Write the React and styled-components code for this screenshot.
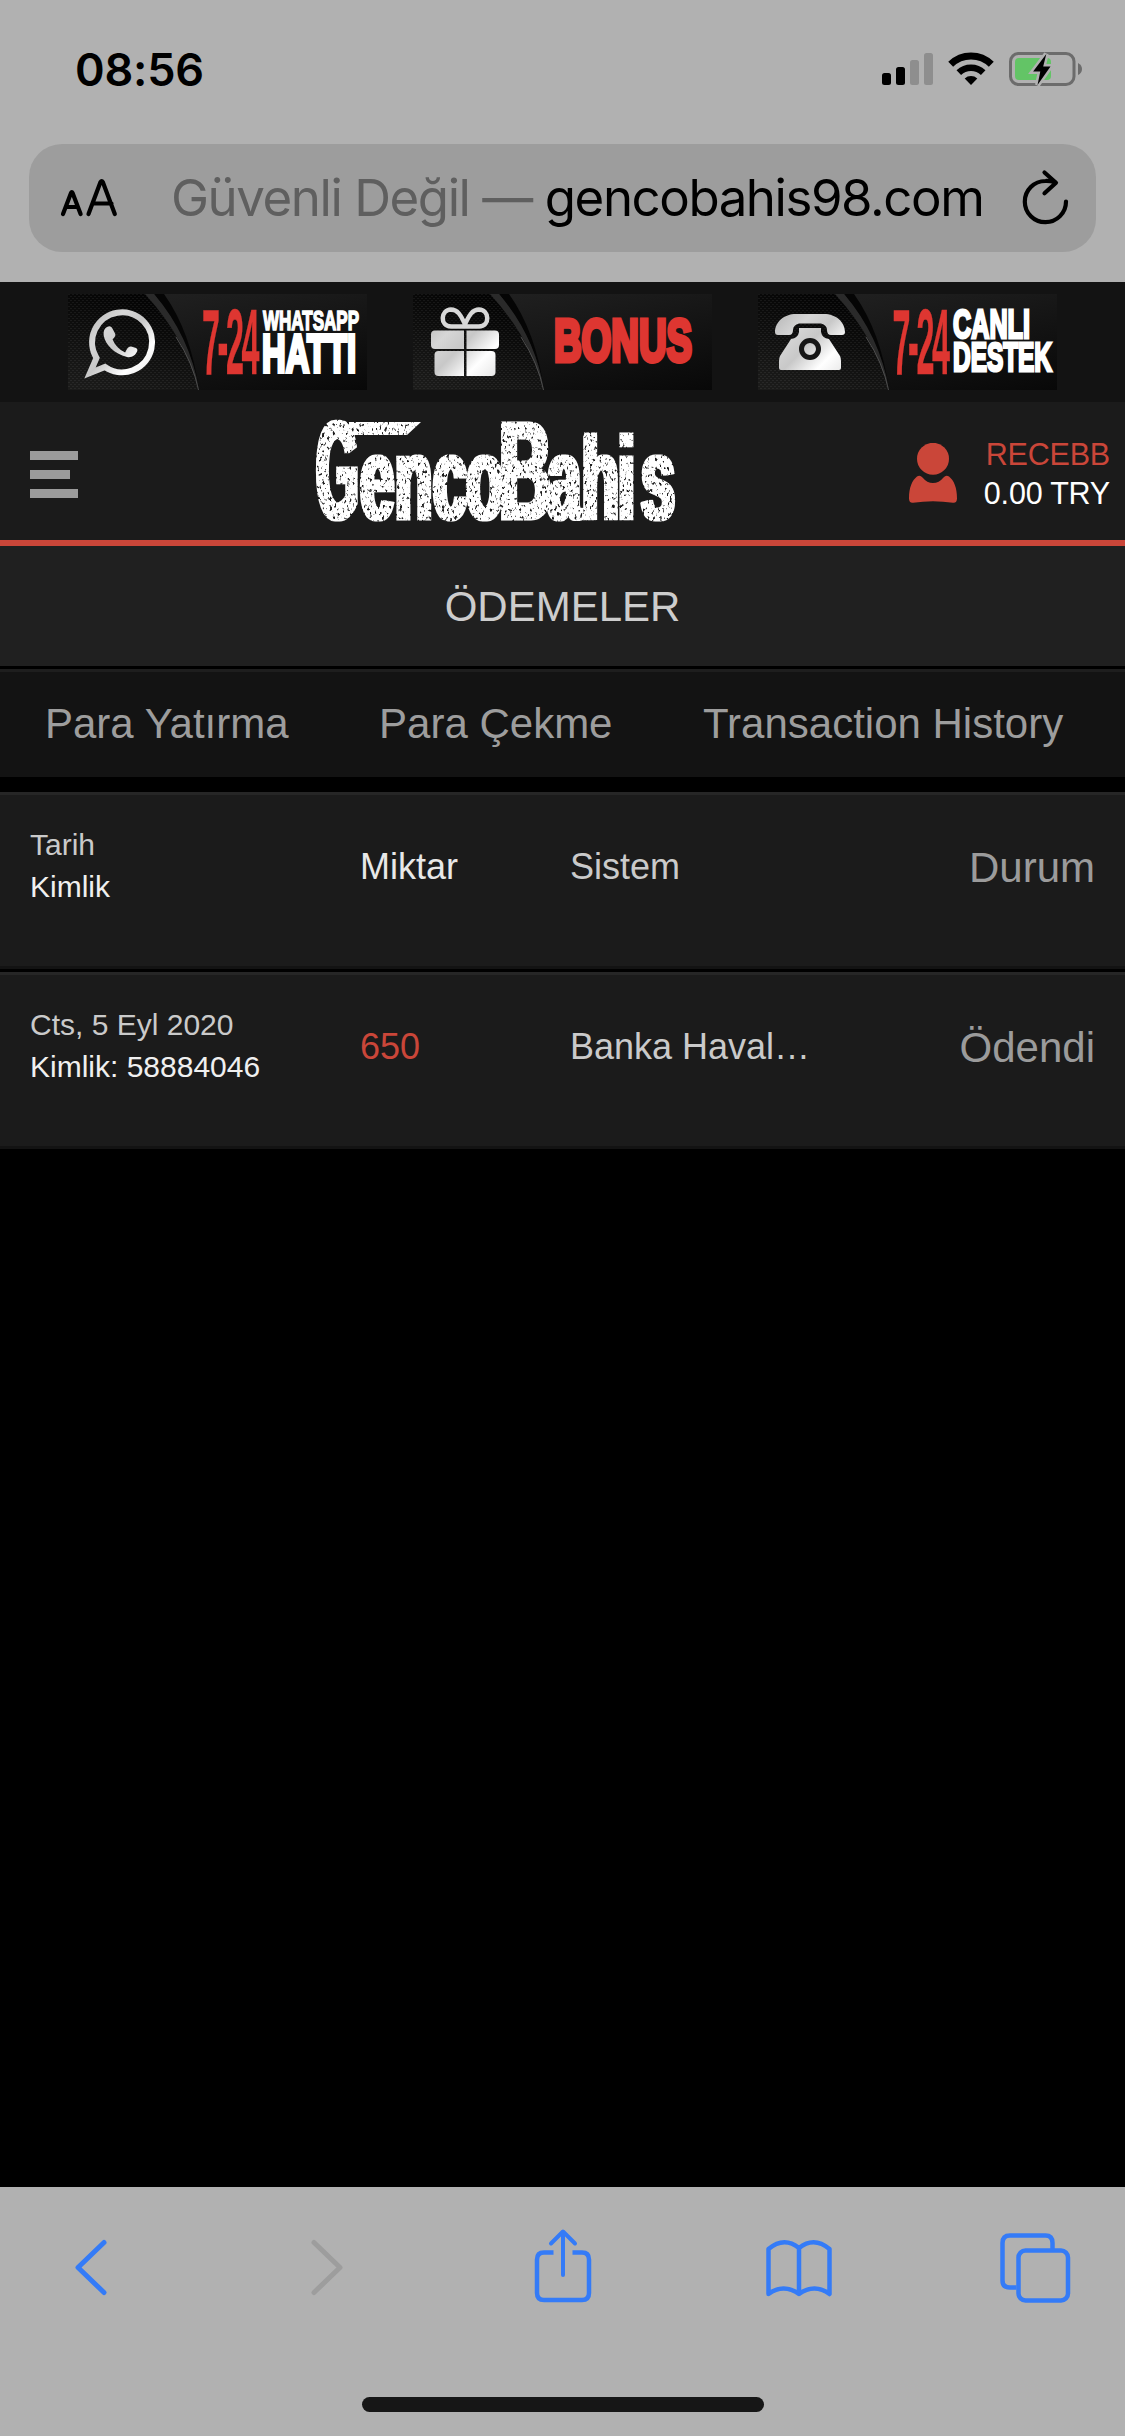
import React from 'react';
import styled, { createGlobalStyle } from "styled-components";

const GlobalStyle = createGlobalStyle`
  body {
    margin: 0;
    background: #000;
  }
`;

const Screen = styled("div")`
  display: flex;
  flex-direction: column;
  width: 1125px;
  height: 2436px;
  overflow: hidden;
  background: #000;
  font-family: "Liberation Sans", Helvetica, Arial, sans-serif;
  white-space: nowrap;
`;

const BrowserTop = styled("header")`
  height: 282px;
  flex: none;
  background: #b1b1b1;
  font-family: Inter, Roboto, sans-serif;
`;

const StatusBar = styled("div")`
  display: flex;
  justify-content: space-between;
  align-items: center;
  height: 138px;
  padding: 0 42px 0 75px;
`;

const Clock = styled("span")`
  font-size: 45px;
  font-weight: 600;
  letter-spacing: -0.2px;
`;

const AddressBar = styled("div")`
  display: flex;
  align-items: center;
  height: 108px;
  margin: 6px 29px 0;
  border-radius: 33px;
  background: #9d9d9d;
`;

const Address = styled("div")`
  flex: 1;
  margin-left: 51px;
  font-size: 51px;
  line-height: 60px;
  letter-spacing: -1.45px;
  color: #000;
`;

const Insecure = styled("span")`
  color: #5f5f5f;
`;

const Banners = styled("div")`
  display: flex;
  justify-content: space-between;
  align-items: center;
  flex: none;
  height: 120px;
  padding: 0 68px;
  background: #131313;
`;

const BannerImage = styled("svg")`
  overflow: visible;
  font-family: "Liberation Sans", Arial, sans-serif;
  font-weight: 700;
`;

const SiteHeader = styled("div")`
  display: grid;
  grid-template-columns: 317px 360px 1fr auto;
  align-items: center;
  flex: none;
  height: 138px;
  border-bottom: 6px solid #ca4639;
  background: #1b1b1b;
`;

const MenuButton = styled("div")`
  display: flex;
  flex-direction: column;
  gap: 10px;
  margin: 7px 0 0 30px;
`;

const MenuBar = styled("span")`
  width: ${({ $short }) => $short ? "40px" : "48px"};
  height: 9px;
  background: #9b9b9b;
`;

const LogoImage = styled("svg")`
  overflow: visible;
  font-family: "Liberation Sans", Arial, sans-serif;
  font-weight: 700;
`;

const Account = styled("div")`
  display: flex;
  align-items: center;
  gap: 27px;
  grid-column: 4;
  padding: 5px 15px 0 0;
`;

const AccountText = styled("div")`
  font-size: 30.5px;
  line-height: 39px;
  letter-spacing: -0.2px;
  text-align: right;
  color: ${({ $color }) => $color};
`;

const PageTitle = styled("h1")`
  flex: none;
  height: 120px;
  margin: 0;
  border-bottom: 3px solid #000;
  background: #202020;
  color: #cdcdcd;
  font-size: 42px;
  font-weight: 400;
  line-height: 121px;
  text-align: center;
`;

const Tabs = styled("nav")`
  display: flex;
  gap: 90.5px;
  flex: none;
  height: 105px;
  margin-bottom: 15px;
  padding-left: 45px;
  border-top: 3px solid #1e1e1e;
  background: #131313;
`;

const Tab = styled("span")`
  color: #9d9d9d;
  font-size: 42px;
  line-height: 104px;
`;

const Row = styled("div")`
  display: grid;
  grid-template-columns: 330px 210px 245px 1fr;
  grid-template-rows: 84px;
  align-items: center;
  flex: none;
  box-sizing: border-box;
  height: 177px;
  margin-bottom: 3px;
  padding: 29px 30px 0;
  border-top: 3px solid #262626;
  border-bottom: 3px solid #131313;
  background: #1b1b1b;
`;

const Meta = styled("div")`
  color: ${({ $color }) => $color};
  font-size: 30px;
  line-height: 42px;
`;

const Cell = styled("div")`
  padding-top: 2px;
  color: ${({ $color }) => $color};
  font-size: 36px;
`;

const Status = styled("div")`
  padding-top: 3px;
  color: #9b9b9b;
  font-size: 42px;
  text-align: right;
`;

const BrowserBottom = styled("footer")`
  flex: none;
  height: 249px;
  margin-top: auto;
  background: #b1b1b1;
`;

const Toolbar = styled("div")`
  display: flex;
  justify-content: space-between;
  padding: 36px 54px 0 55px;
`;

const HomeIndicator = styled("div")`
  width: 402px;
  height: 15px;
  margin: 84px auto 0;
  border-radius: 8px;
  background: #161616;
`;

const TextSize = styled("svg")`
  margin-left: 31px;
`;

const Reload = styled("svg")`
  margin: 0 27px 2px 0;
`;

const StatusIcons = () => (
    <svg width="202" height="36" viewBox="881 51 202 36">
        <rect x="882" y="73" width="9" height="12" rx="2.5" />
        <rect x="896" y="67" width="9" height="18" rx="2.5" />
        <rect x="910" y="60" width="9" height="25" rx="2.5" fill="#8e8e8e" />
        <rect x="924" y="53" width="9" height="32" rx="2.5" fill="#8e8e8e" />
        <g fill="none" stroke="#000">
            <path d="M950.7 64.2a29 29 0 0 1 40.6 0" strokeWidth="7" />
            <path d="M958.8 72.6a17.5 17.5 0 0 1 24.4 0" strokeWidth="6.5" />
        </g>
        <path d="M971 85l-6.3-6.6a9.2 9.2 0 0 1 12.6 0z" />
        <rect x="1010.5" y="53.5" width="63.5" height="31" rx="8" fill="none" stroke="#6c6c6c" strokeWidth="3" />
        <path d="M1078 63q4 2 4 6t-4 6z" fill="#6c6c6c" />
        <rect x="1015" y="58" width="36" height="22" rx="4" fill="#63c466" />
        <path
            d="M1046.3 54l-13.2 17.5h7.2L1037.5 85l13-18.5h-7.3z"
            stroke="#b1b1b1"
            strokeWidth="5"
            paintOrder="stroke"
        />
    </svg>
);

const TextSizeIcon = () => (
    <TextSize width="60" height="42" viewBox="60 178 60 42">
        <g fill="none" stroke="#000" strokeWidth="4.2" strokeLinecap="round" strokeLinejoin="round">
            <path d="M63 215l8-21q.8-1.6 1.6 0l8 21M66 208h12" />
            <path d="M88.5 215l12-32q1.2-2 2.3 0l12 32M92.5 204.5h19" />
        </g>
    </TextSize>
);

const ReloadIcon = () => (
    <Reload width="48" height="58" viewBox="1021 169 48 58">
        <g fill="none" stroke="#000" strokeWidth="4.2" strokeLinecap="round" strokeLinejoin="round">
            <path d="M1066 202.5a20.6 20.6 0 1 1-20.6-20.5q4.5-.2 9.5 1.2" />
            <path d="M1044.5 173.500l11.5 10.2-11.5 10.6" />
        </g>
    </Reload>
);

const BannerArt = ({ id, children }) => (
    <BannerImage width="299" height="96" viewBox="0 0 299 96">
        <defs>
            <linearGradient id={`${id}-bg`} x1="0.3" y1="0" x2="1" y2="1">
                <stop offset="0" stopColor="#202020" />
                <stop offset="1" stopColor="#080808" />
            </linearGradient>
            <linearGradient id={`${id}-dark`} x1="0.6" y1="0" x2="0.2" y2="1">
                <stop offset="0" stopColor="#030303" />
                <stop offset="1" stopColor="#1b1b1a" />
            </linearGradient>
            <linearGradient id={`${id}-metal`} gradientUnits="userSpaceOnUse" x1="18" y1="15" x2="86" y2="82">
                <stop offset="0" stopColor="#b4b4b4" />
                <stop offset="0.3" stopColor="#d6d6d6" />
                <stop offset="0.5" stopColor="#c8c8c8" />
                <stop offset="0.75" stopColor="#fff" />
                <stop offset="1" stopColor="#e4e4e4" />
            </linearGradient>
            <pattern id={`${id}-mesh`} width="4" height="4" patternUnits="userSpaceOnUse">
                <path d="M0 0h2v1h-2zM2 2h2v1h-2z" fill="#fff" fillOpacity="0.06" />
            </pattern>
        </defs>
        <rect width="299" height="96" fill={`url(#${id}-bg)`} />
        <path d="M86 0h10q27 38 35 96Q123 46 86 0z" fill="#050505" />
        <path d="M76 0h10q36 42 45 96Q117 44 76 0z" fill="#2a2a2a" />
        <path d="M0 0h77q42 46 53 96H0z" fill={`url(#${id}-dark)`} />
        <path d="M0 0h77q42 46 53 96H0z" fill={`url(#${id}-mesh)`} />
        <path d="M108 43q17 26 22.5 53" fill="none" stroke="#555" strokeWidth="0.9" />
        {children}
    </BannerImage>
);

const Fitted = ({ size, width, color = "#fff", stroke = 1.6, children, ...rest }) => (
    <text
        fontSize={size}
        textLength={width}
        lengthAdjust="spacingAndGlyphs"
        fill={color}
        stroke={color}
        strokeWidth={stroke}
        {...rest}
    >
        {children}
    </text>
);

const WhatsappBanner = () => (
    <BannerArt id="wa">
        <path
            d="M28.5 64A30 30 0 1 1 37 73L22 79z"
            fill="none"
            stroke="url(#wa-metal)"
            strokeWidth="6"
        />
        <path
            d="M39 33q3.5-1.8 5 .8l3.2 6q1 2.4-2.6 5.4c2.5 6.500 7 10.500 12.500 13.200 2-4 3.500-6.400 6-5.900l5 1.400q1.800 1 1.200 3.200c-1.600 4.500-6 7-10.300 6-13-3.300-21.500-12.600-23.200-21.100-.5-4 .2-7.500 3.200-9z"
            fill="url(#wa-metal)"
        />
        <Fitted x="134" y="79.5" size="93" width="55" letterSpacing="-7" color="#de3631" stroke="0.5">7-24</Fitted>
        <Fitted x="195" y="36" size="27" width="96">WHATSAPP</Fitted>
        <Fitted x="194" y="78" size="53" width="94" stroke="4">HATTI</Fitted>
    </BannerArt>
);

const BonusBanner = () => (
    <BannerArt id="bo">
        <path
            d="M52 32.5H38C26.500 32 27.500 16 38 15.500c8 0 11 9 14 14.500 3-5.500 6-14.500 14-14.500 10.500.5 11.500 16.500 0 17z"
            fill="none"
            stroke="#d8d8d8"
            strokeWidth="4.5"
        />
        <g fill="url(#bo-metal)">
            <path d="M22 36.5h29V55H22q-4 0-4-4V40.5q0-4 4-4z" />
            <path d="M53.5 36.5H82q4 0 4 4V51q0 4-4 4H53.5z" />
            <path d="M25.5 57H51v25H25.5q-4 0-4-4V61q0-4 4-4z" />
            <path d="M53.5 57h25q4 0 4 4v17q0 4-4 4h-25z" />
        </g>
        <Fitted x="141" y="67" size="60" width="138" color="#de3631" stroke="5">BONUS</Fitted>
    </BannerArt>
);

const SupportBanner = () => (
    <BannerArt id="su">
        <g fill="url(#su-metal)">
            <path d="M17 38c0-10 9-18 21-18h28c12 0 21 8 21 18q0 3-3 3H73q-4 0-4-5t-6-6.500H41q-6 1.500-6 6.500t-4 5H20q-3 0-3-3z" />
            <path d="M41 34h22v4q1 6 8 7l11 17q1 2 1 5v7q0 2-2 2H23q-2 0-2-2v-7q0-3 1-5l11-17q7-1 8-7z" />
        </g>
        <circle cx="52" cy="55" r="8.5" fill="none" stroke="#161616" strokeWidth="5" />
        <Fitted x="134.5" y="79.5" size="93" width="55" letterSpacing="-7" color="#de3631" stroke="0.5">7-24</Fitted>
        <Fitted x="195" y="44" size="41" width="77" stroke="3">CANLI</Fitted>
        <Fitted x="195" y="77" size="41" width="99" stroke="3">DESTEK</Fitted>
    </BannerArt>
);

const Logo = () => (
    <LogoImage width="360" height="102" viewBox="317 419 360 102">
        <defs>
            <filter id="grunge" filterUnits="userSpaceOnUse" x="312" y="414" width="370" height="112">
                <feMorphology in="SourceGraphic" operator="dilate" radius="2 0" result="heavy" />
                <feTurbulence type="fractalNoise" baseFrequency="0.4 0.26" numOctaves="2" seed="7" />
                <feColorMatrix values="0 0 0 0 0  0 0 0 0 0  0 0 0 0 0  7 0 0 0 -4.1" result="specks" />
                <feComposite in="heavy" in2="specks" operator="out" />
            </filter>
        </defs>
        <g filter="url(#grunge)" fill="#fff" stroke="#fff" strokeWidth="3">
            <path d="M333 421h86l-14 13h-72z" stroke="none" />
            <text transform="translate(317 518) scale(0.39 1)" x="-2" fontSize="139">G</text>
            <text
                transform="translate(317 518) scale(0.52 1)"
                x="83 150 223 287 350 443 509 579 623"
                fontSize="117"
            >
                enco
                <tspan fontSize="140">B</tspan>
                ahis
            </text>
        </g>
    </LogoImage>
);

const UserIcon = () => (
    <svg width="48" height="61" viewBox="908 442.5 48 61" fill="#ca4639">
        <circle cx="932" cy="458.3" r="16" />
        <path d="M916 476q3-2 5.500 1 4.500 5.500 10.500 5.500t10.500-5.500q2.500-3 5.500-1c5 4 8 11 8 22q0 4.500-4 4.200-20-3-40 0-4 .3-4-4.200c0-11 3-18 8-22z" />
    </svg>
);

const ToolIcon = ({ children, color = "#347bf7" }) => (
    <svg
        width="72"
        height="90"
        viewBox="0 0 72 90"
        fill="none"
        stroke={color}
        strokeWidth="4.5"
        strokeLinejoin="round"
        strokeLinecap="round"
    >
        {children}
    </svg>
);

const payments = [
    { date: "Tarih", id: "Kimlik", amount: "Miktar", amountColor: "#e8e8e8", system: "Sistem", status: "Durum" },
    { date: "Cts, 5 Eyl 2020", id: "Kimlik: 58884046", amount: "650", amountColor: "#ca4639", system: "Banka Haval…", status: "Ödendi" }
];

class App extends React.Component {
    _renderRow = (item) => (
        <Row key={item.id}>
            <div>
                <Meta $color="#cacaca">{item.date}</Meta>
                <Meta $color="#f0f0f0">{item.id}</Meta>
            </div>
            <Cell $color={item.amountColor}>{item.amount}</Cell>
            <Cell $color="#cacaca">{item.system}</Cell>
            <Status>{item.status}</Status>
        </Row>
    );

    render() {
        return (
            <Screen>
                <GlobalStyle />
                <BrowserTop>
                    <StatusBar>
                        <Clock>08:56</Clock>
                        <StatusIcons />
                    </StatusBar>
                    <AddressBar>
                        <TextSizeIcon />
                        <Address>
                            <Insecure>Güvenli Değil — </Insecure>gencobahis98.com
                        </Address>
                        <ReloadIcon />
                    </AddressBar>
                </BrowserTop>
                <Banners>
                    <WhatsappBanner />
                    <BonusBanner />
                    <SupportBanner />
                </Banners>
                <SiteHeader>
                    <MenuButton>
                        <MenuBar />
                        <MenuBar $short />
                        <MenuBar />
                    </MenuButton>
                    <Logo />
                    <Account>
                        <UserIcon />
                        <div>
                            <AccountText $color="#ca4639">RECEBB</AccountText>
                            <AccountText $color="#fff">0.00 TRY</AccountText>
                        </div>
                    </Account>
                </SiteHeader>
                <PageTitle>ÖDEMELER</PageTitle>
                <Tabs>
                    <Tab>Para Yatırma</Tab>
                    <Tab>Para Çekme</Tab>
                    <Tab>Transaction History</Tab>
                </Tabs>
                {payments.map(this._renderRow)}
                <BrowserBottom>
                    <Toolbar>
                        <ToolIcon><path d="M49 19.5L23 44.5l26 25" strokeWidth="5" /></ToolIcon>
                        <ToolIcon color="#9d9d9d"><path d="M23 19.5l26 25-26 25" strokeWidth="5" /></ToolIcon>
                        <ToolIcon>
                            <path d="M26.5 29.5H17q-7 0-7 7v33.5q0 7 7 7h38q7 0 7-7V36.5q0-7-7-7h-9.5" strokeLinecap="butt" />
                            <path d="M36 52V9.5M24 20.5l12-12 12 12" strokeWidth="4" />
                        </ToolIcon>
                        <ToolIcon>
                            <path d="M36 71V25q-15-12-30.5 1v45q15-11 30.5 0 15.5-11 30.5 0V26q-15.5-13-30.5-1" />
                        </ToolIcon>
                        <ToolIcon>
                            <path d="M17.5 64.5H11q-7.5 0-7.5-7V20q0-7.5 7.500-7.500h35.500q7 0 7 7.500v7" strokeLinecap="butt" />
                            <rect x="19.5" y="27.5" width="49.5" height="50" rx="7" />
                        </ToolIcon>
                    </Toolbar>
                    <HomeIndicator />
                </BrowserBottom>
            </Screen>
        );
    }
}

export default App;
